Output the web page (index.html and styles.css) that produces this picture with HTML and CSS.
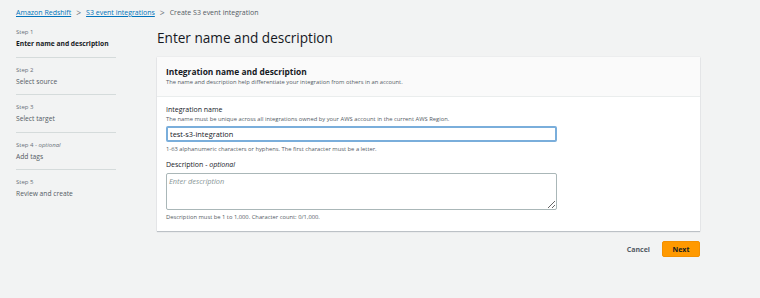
FILE: index.html
```html
<!DOCTYPE html>
<html lang="en">
<head>
    <meta charset="UTF-8">
    <title>Create S3 event integration</title>
    <link rel="stylesheet" href="styles.css">
</head>
<body>
    <nav class="breadcrumbs">
        <a href="#">Amazon Redshift</a>
        <span class="sep">&gt;</span>
        <a href="#">S3 event integrations</a>
        <span class="sep">&gt;</span>
        <span class="current">Create S3 event integration</span>
    </nav>

    <div class="layout">
        <ul class="steps">
            <li class="step active">
                <span class="step-num">Step 1</span>
                <span class="step-name">Enter name and description</span>
            </li>
            <li class="step">
                <span class="step-num">Step 2</span>
                <span class="step-name">Select source</span>
            </li>
            <li class="step">
                <span class="step-num">Step 3</span>
                <span class="step-name">Select target</span>
            </li>
            <li class="step">
                <span class="step-num">Step 4 - <i>optional</i></span>
                <span class="step-name">Add tags</span>
            </li>
            <li class="step">
                <span class="step-num">Step 5</span>
                <span class="step-name">Review and create</span>
            </li>
        </ul>

        <main class="content">
            <h1>Enter name and description</h1>

            <section class="card">
                <div class="card-header">
                    <h2>Integration name and description</h2>
                    <p>The name and description help differentiate your integration from others in an account.</p>
                </div>
                <div class="card-body">
                    <div class="field">
                        <label for="name">Integration name</label>
                        <p class="hint">The name must be unique across all integrations owned by your AWS account in the current AWS Region.</p>
                        <input type="text" id="name" value="test-s3-integration">
                        <p class="constraint">1-63 alphanumeric characters or hyphens. The first character must be a letter.</p>
                    </div>
                    <div class="field">
                        <label for="desc">Description - <i>optional</i></label>
                        <textarea id="desc" placeholder="Enter description"></textarea>
                        <p class="constraint">Description must be 1 to 1,000. Character count: 0/1,000.</p>
                    </div>
                </div>
            </section>

            <div class="actions">
                <button type="button" class="link-btn">Cancel</button>
                <button type="button" class="primary-btn">Next</button>
            </div>
        </main>
    </div>
</body>
</html>
```

FILE: styles.css
```css
body {
    margin: 0;
    background: #f2f3f3;
    font-family: "Open Sans", "Noto Sans", sans-serif;
    color: #16191f;
}

.breadcrumbs {
    display: flex;
    align-items: center;
    gap: 5px;
    padding: 8px 16px 2px;
    font-size: 7px;
    line-height: 10px;
}

.breadcrumbs a {
    color: #0073bb;
    text-decoration: underline;
}

.breadcrumbs .sep {
    color: #687078;
    font-size: 8.5px;
}

.breadcrumbs .current {
    color: #545b64;
}

.layout {
    display: flex;
}

.steps {
    list-style: none;
    margin: 0;
    padding: 0 0 0 16px;
    width: 100px;
}

.step {
    display: flex;
    flex-direction: column;
    border-bottom: 1px solid #d5dbdb;
    padding: 8px 0;
}

.step:last-child {
    border-bottom: none;
}

.step-num {
    font-size: 6px;
    line-height: 8px;
    color: #687078;
    margin-bottom: 3px;
}

.step-name {
    font-size: 6.7px;
    line-height: 9.6px;
    color: #545b64;
    white-space: nowrap;
}

.step.active .step-name {
    color: #16191f;
    font-weight: 700;
}

.content {
    margin-left: 41px;
    width: 543px;
}

h1 {
    font-size: 13.6px;
    font-weight: 400;
    line-height: 20px;
    margin: 8px 0 9px;
}

.card {
    background: #fff;
    box-shadow: 0 1px 1px rgba(0, 22, 40, 0.2), 0 0 1px rgba(0, 22, 40, 0.15);
}

.card-header {
    background: #fafafa;
    border-bottom: 1px solid #eaeded;
    padding: 9px 9px 10px;
}

.card-header h2 {
    font-size: 8.4px;
    line-height: 12px;
    font-weight: 700;
    margin: 0;
}

.card-header p {
    font-size: 5.8px;
    line-height: 8px;
    color: #545b64;
    margin: 0;
}

.card-body {
    padding: 8px 9px 10px;
}

.field {
    margin-bottom: 7px;
}

.field:last-child {
    margin-bottom: 0;
}

label {
    display: block;
    font-size: 7px;
    line-height: 10px;
}

.hint {
    font-size: 5.8px;
    line-height: 8px;
    color: #545b64;
    margin: 0 0 3px;
}

input, textarea {
    display: block;
    box-sizing: border-box;
    width: 391px;
    font-family: inherit;
    border: 1px solid #aab7b8;
    border-radius: 2px;
    padding: 2px 2px;
    font-size: 7.4px;
    color: #16191f;
    background: #fff;
}

input {
    height: 16px;
    border: 2px solid #7aaedb;
    outline: none;
}

textarea {
    height: 37px;
    margin-top: 3px;
    resize: vertical;
}

textarea::placeholder {
    font-style: italic;
    color: #879596;
}

.constraint {
    font-size: 5.8px;
    line-height: 8px;
    color: #545b64;
    margin: 3px 0 0;
}

.actions {
    display: flex;
    justify-content: flex-end;
    align-items: center;
    gap: 12px;
    margin-top: 10px;
}

.link-btn {
    background: none;
    border: none;
    padding: 0;
    font-family: inherit;
    font-size: 7px;
    font-weight: 700;
    color: #545b64;
}

.primary-btn {
    background: #ff9900;
    border: 1px solid #f39000;
    border-radius: 2px;
    font-family: inherit;
    font-size: 7px;
    font-weight: 700;
    color: #16191f;
    width: 38px;
    height: 16px;
    padding: 0;
}
```
